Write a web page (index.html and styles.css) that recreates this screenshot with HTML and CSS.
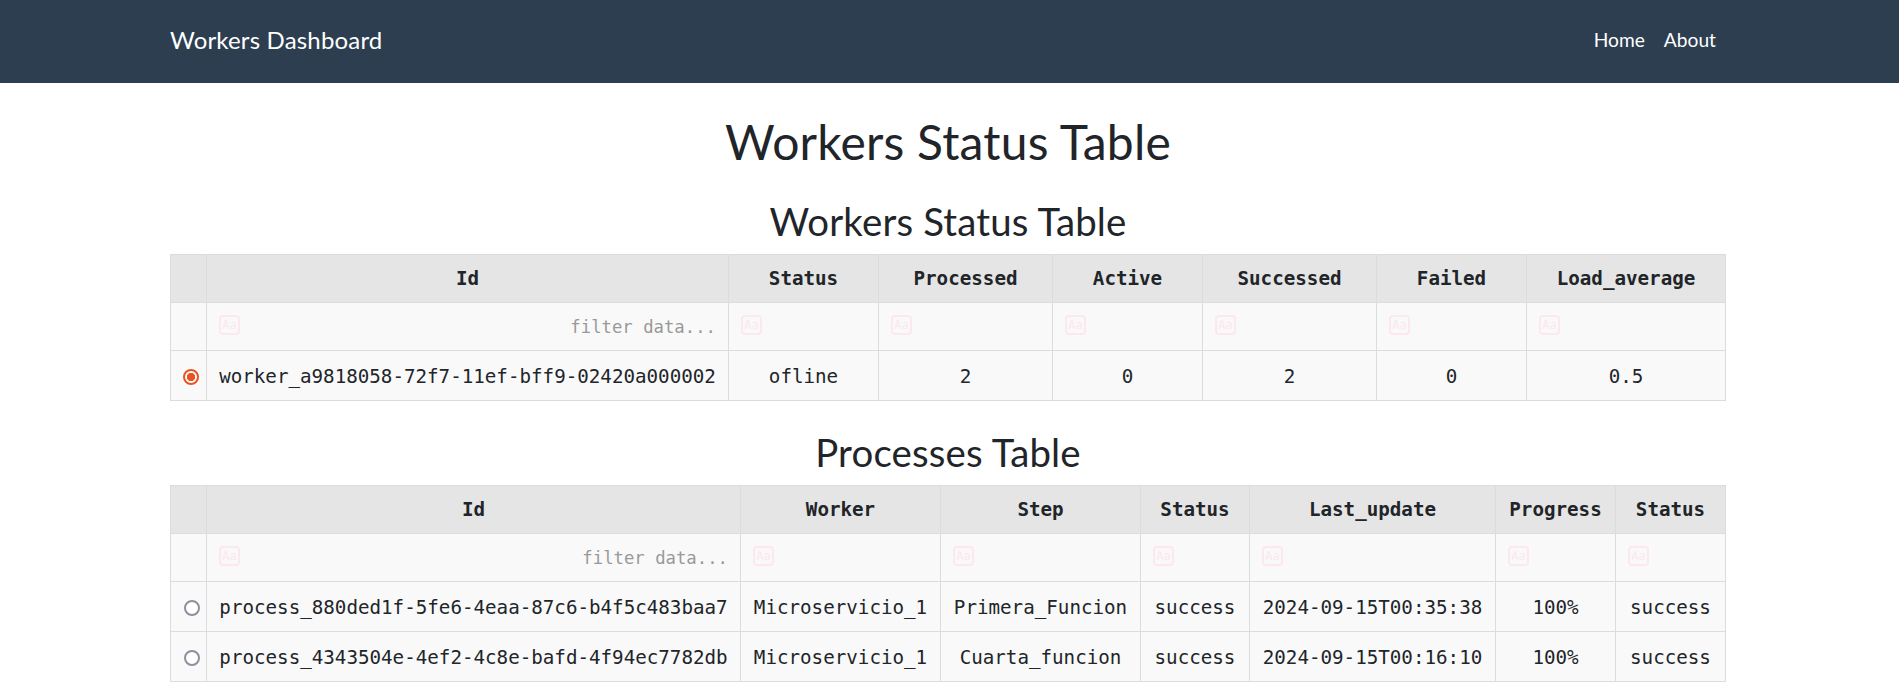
FILE: index.html
```html
<!DOCTYPE html>
<html lang="en">
<head>
<meta charset="utf-8">
<title>Workers Dashboard</title>
<link rel="stylesheet" href="styles.css">
</head>
<body>
<nav class="navbar">
  <a class="brand">Workers Dashboard</a>
  <div class="links"><a>Home</a><a>About</a></div>
</nav>
<main class="container">
  <h1 class="title">Workers Status Table</h1>
  <h2 class="subtitle">Workers Status Table</h2>
  <table class="grid">
    <colgroup><col class="w36"><col class="w522"><col class="w150"><col class="w174"><col class="w150"><col class="w174"><col class="w150"><col class="w199"></colgroup>
    <tr class="head"><th></th><th>Id</th><th>Status</th><th>Processed</th><th>Active</th><th>Successed</th><th>Failed</th><th>Load_average</th></tr>
    <tr class="filter"><td></td><td><div class="field"><span class="case">Aa</span><span class="hint">filter data...</span></div></td><td><div class="field"><span class="case">Aa</span></div></td><td><div class="field"><span class="case">Aa</span></div></td><td><div class="field"><span class="case">Aa</span></div></td><td><div class="field"><span class="case">Aa</span></div></td><td><div class="field"><span class="case">Aa</span></div></td><td><div class="field"><span class="case">Aa</span></div></td></tr>
    <tr class="row"><td class="pick"><span class="radio checked"></span></td><td>worker_a9818058-72f7-11ef-bff9-02420a000002</td><td>ofline</td><td>2</td><td>0</td><td>2</td><td>0</td><td>0.5</td></tr>
  </table>
  <h2 class="subtitle second">Processes Table</h2>
  <table class="grid">
    <colgroup><col class="w36"><col class="w534"><col class="w200"><col class="w200"><col class="w109"><col class="w246"><col class="w120"><col class="w110"></colgroup>
    <tr class="head"><th></th><th>Id</th><th>Worker</th><th>Step</th><th>Status</th><th>Last_update</th><th>Progress</th><th>Status</th></tr>
    <tr class="filter"><td></td><td><div class="field"><span class="case">Aa</span><span class="hint">filter data...</span></div></td><td><div class="field"><span class="case">Aa</span></div></td><td><div class="field"><span class="case">Aa</span></div></td><td><div class="field"><span class="case">Aa</span></div></td><td><div class="field"><span class="case">Aa</span></div></td><td><div class="field"><span class="case">Aa</span></div></td><td><div class="field"><span class="case">Aa</span></div></td></tr>
    <tr class="row"><td class="pick"><span class="radio"></span></td><td>process_880ded1f-5fe6-4eaa-87c6-b4f5c483baa7</td><td>Microservicio_1</td><td>Primera_Funcion</td><td>success</td><td>2024-09-15T00:35:38</td><td>100%</td><td>success</td></tr>
    <tr class="row"><td class="pick"><span class="radio"></span></td><td>process_4343504e-4ef2-4c8e-bafd-4f94ec7782db</td><td>Microservicio_1</td><td>Cuarta_funcion</td><td>success</td><td>2024-09-15T00:16:10</td><td>100%</td><td>success</td></tr>
  </table>
</main>
</body>
</html>
```
FILE: styles.css
```css
* { box-sizing: border-box; }
body { margin: 0; background: #fff; color: #212529; font-family: Lato, sans-serif; overflow: hidden; }
.navbar { height: 83px; background: #2c3e50; padding: 0 183px 5px 170px; display: flex; align-items: center; justify-content: space-between; color: #fff; }
.brand { font-size: 24px; letter-spacing: 0.17px; }
.links { display: flex; gap: 19px; font-size: 19.2px; }
.container { padding-left: 170px; width: 1726px; }
.title { margin: 0; padding-top: 30px; height: 110px; font-size: 48px; font-weight: 400; line-height: 58px; text-align: center; letter-spacing: 0.2px; }
.subtitle { margin: 0; height: 61px; padding-top: 5px; font-size: 38.4px; font-weight: 400; line-height: 46px; text-align: center; letter-spacing: 0.17px; }
.subtitle.second { height: 84px; padding-top: 28px; }
.grid { table-layout: fixed; width: 1556px; border-collapse: separate; border-spacing: 0; border: 0 solid #dcdcdc; border-width: 1px 0 0 1px; font-family: "DejaVu Sans Mono", monospace; font-size: 19.2px; line-height: 24px; }
.w36 { width: 36px; }
.w522 { width: 522px; }
.w534 { width: 534px; }
.w150 { width: 150px; }
.w174 { width: 174px; }
.w199 { width: 199px; }
.w200 { width: 200px; }
.w109 { width: 109px; }
.w246 { width: 246px; }
.w120 { width: 120px; }
.w110 { width: 110px; }
.grid th, .grid td { padding: 0; border: 0 solid #dcdcdc; border-width: 0 1px 1px 0; text-align: center; white-space: nowrap; vertical-align: middle; }
.head { height: 48px; background: #e5e5e5; }
.filter { height: 48px; background: #f9f9f9; }
.row { height: 50px; background: #f9f9f9; }
.grid .row td { padding-top: 2px; }
.field { display: flex; justify-content: space-between; align-items: flex-start; height: 24px; padding: 0 12px; }
.case { width: 21px; height: 20px; border: 2px solid #fce8ee; border-radius: 4px; color: #fce8ee; font-size: 12px; line-height: 17px; }
.hint { color: #999; font-size: 17.3px; line-height: 24px; }
.radio { display: block; width: 16px; height: 16px; margin: 1px 0 0 13px; border: 2px solid #8f8f9d; border-radius: 50%; background: #fff; }
.radio.checked { margin: 1px 0 0 12px; border-color: #e95420; background: radial-gradient(circle, #e95420 3.9px, #fff 4.5px); }
```
